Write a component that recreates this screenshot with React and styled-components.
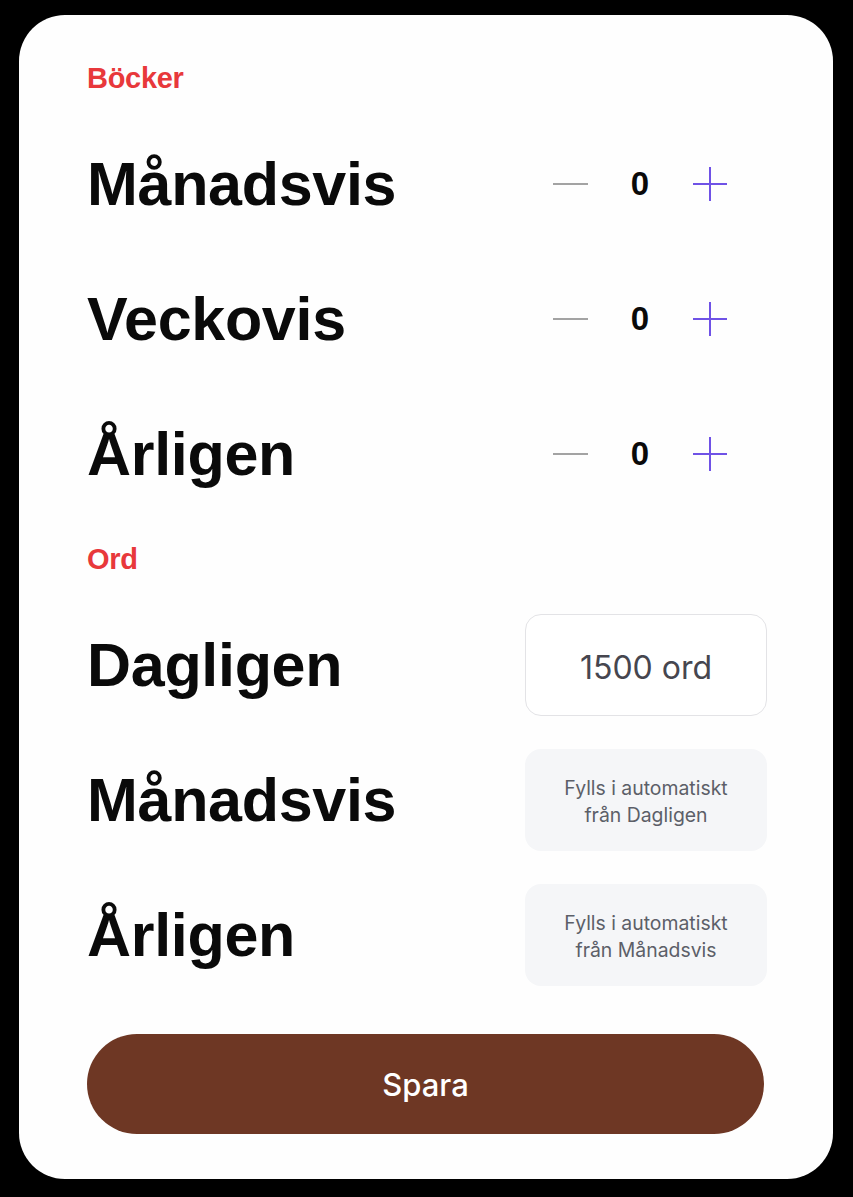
import React, { useState } from "react";
import styled, { createGlobalStyle } from "styled-components";

const GlobalStyle = createGlobalStyle`
	html, body {
		margin: 0;
		padding: 0;
		background: #000;
	}
	body {
		font-family: "Liberation Sans", Arial, sans-serif;
		-webkit-font-smoothing: antialiased;
	}
`;

function MinusIcon() {
	return (
		<svg width="35" height="4" viewBox="0 0 35 4">
			<line x1="0" y1="2" x2="35" y2="2" stroke="#a3a3a3" strokeWidth="2" />
		</svg>
	);
}

function PlusIcon() {
	return (
		<svg width="34" height="34" viewBox="0 0 34 34">
			<line x1="0" y1="17" x2="34" y2="17" stroke="#6f52e6" strokeWidth="2" />
			<line x1="17" y1="0" x2="17" y2="34" stroke="#6f52e6" strokeWidth="2" />
		</svg>
	);
}

function StepperRow({ label }) {
	const [count, setCount] = useState(0);
	return (
		<Row>
			<RowLabel>{label}</RowLabel>
			<Stepper>
				<StepButton aria-label="Minska" onClick={() => setCount(Math.max(0, count - 1))}>
					<MinusIcon />
				</StepButton>
				<Count>{count}</Count>
				<StepButton aria-label="Öka" onClick={() => setCount(count + 1)}>
					<PlusIcon />
				</StepButton>
			</Stepper>
		</Row>
	);
}

function App() {
	return (
		<>
			<GlobalStyle />
			<Card>
				<SectionTitle>Böcker</SectionTitle>
				<List>
					<StepperRow label="Månadsvis" />
					<StepperRow label="Veckovis" />
					<StepperRow label="Årligen" />
				</List>

				<SectionTitle $spaced>Ord</SectionTitle>
				<List>
					<Row>
						<RowLabel>Dagligen</RowLabel>
						<WordInput defaultValue="1500 ord" />
					</Row>
					<Row>
						<RowLabel>Månadsvis</RowLabel>
						<AutoField>
							Fylls i automatiskt
							<br />
							från Dagligen
						</AutoField>
					</Row>
					<Row>
						<RowLabel>Årligen</RowLabel>
						<AutoField>
							Fylls i automatiskt
							<br />
							från Månadsvis
						</AutoField>
					</Row>
				</List>

				<SaveButton>Spara</SaveButton>
			</Card>
		</>
	);
}

const Card = styled.main`
	box-sizing: border-box;
	width: 814px;
	margin: 15px 0 19px 19px;
	padding: 46px 66px 45px 68px;
	background: #fefefe;
	border-radius: 46px;
	display: flex;
	flex-direction: column;
`;

const SectionTitle = styled.h2`
	margin: ${(p) => (p.$spaced ? "37px" : "0")} 0 0;
	height: 34px;
	line-height: 34px;
	font-size: 29px;
	font-weight: 700;
	letter-spacing: -0.3px;
	color: #e8383b;
`;

const List = styled.div`
	display: flex;
	flex-direction: column;
	gap: 33px;
	margin-top: 38px;
`;

const Row = styled.div`
	height: 102px;
	display: flex;
	align-items: center;
	justify-content: space-between;
`;

const RowLabel = styled.span`
	font-size: 61px;
	font-weight: 700;
	letter-spacing: -0.3px;
	color: #0a0a0a;
`;

const Stepper = styled.div`
	box-sizing: border-box;
	width: 242px;
	padding-right: 12px;
	display: grid;
	grid-template-columns: repeat(3, 70px);
	justify-content: center;
	align-items: center;
`;

const StepButton = styled.button`
	height: 44px;
	padding: 0;
	border: none;
	background: none;
	display: flex;
	align-items: center;
	justify-content: center;
	cursor: pointer;
`;

const Count = styled.span`
	text-align: center;
	font-size: 33px;
	font-weight: 700;
	color: #0a0a0a;
`;

const WordInput = styled.input`
	box-sizing: border-box;
	width: 242px;
	height: 102px;
	padding: 4px 0 0;
	border: 1px solid #e3e3e6;
	border-radius: 16px;
	background: #fff;
	text-align: center;
	font-family: Inter, "Noto Sans", sans-serif;
	font-size: 32px;
	color: #46464f;
	outline: none;
`;

const AutoField = styled.div`
	box-sizing: border-box;
	width: 242px;
	height: 102px;
	padding-top: 4px;
	border-radius: 16px;
	background: #f5f6f8;
	display: flex;
	align-items: center;
	justify-content: center;
	text-align: center;
	font-family: Inter, "Noto Sans", sans-serif;
	font-size: 19.4px;
	line-height: 27px;
	color: #5c5f68;
`;

const SaveButton = styled.button`
	margin-top: 48px;
	margin-right: 3px;
	height: 100px;
	border: none;
	border-radius: 50px;
	background: #6e3724;
	color: #fff;
	font-family: Inter, "Noto Sans", sans-serif;
	font-size: 31px;
	font-weight: 500;
	cursor: pointer;
`;

export default App;
